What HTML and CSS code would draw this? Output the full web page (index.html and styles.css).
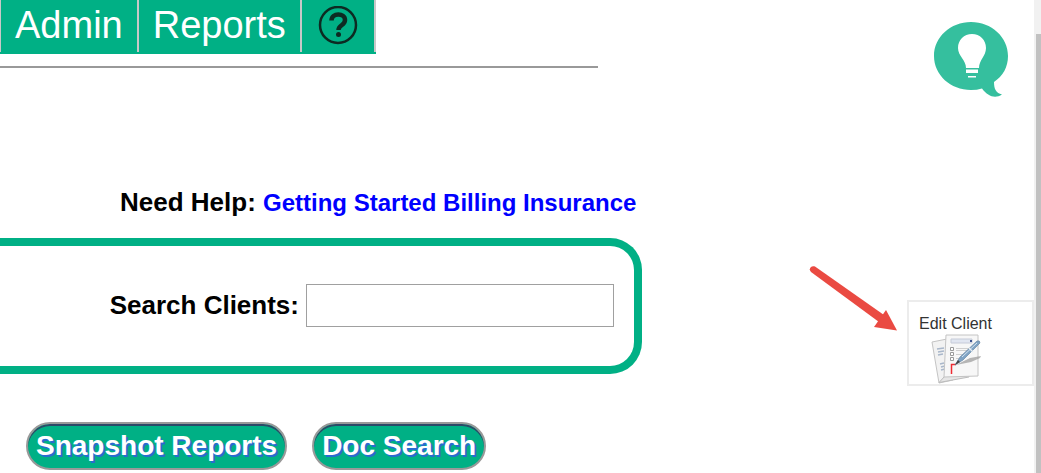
FILE: index.html
```html
<!DOCTYPE html>
<html lang="en">
<head>
<meta charset="utf-8">
<meta name="viewport" content="width=device-width, initial-scale=1">
<title>Clients</title>
<link rel="stylesheet" href="styles.css">
</head>
<body>
<div class="page">
  <main class="main">
    <nav class="menu">
      <a class="menu-item" href="#admin">Admin</a>
      <a class="menu-item" href="#reports">Reports</a>
      <a class="menu-item menu-help" href="#help" aria-label="Help">
        <svg width="40" height="40" viewBox="0 0 40 40" fill="none" stroke="#0d2a22">
          <circle cx="20" cy="19" r="18" stroke-width="2.500"/>
          <path d="M13.500 14.500C13.500 6.500 27 6.500 27 14c0 5.500-6.500 5-6.500 10" stroke-width="4.500"/>
          <circle cx="20.500" cy="28.500" r="2.500" fill="#0d2a22" stroke="none"/>
        </svg>
      </a>
    </nav>
    <hr class="rule">
    <p class="help-line">Need Help: <a class="help-link" href="#guide">Getting Started Billing Insurance</a></p>
    <form class="search-panel">
      <label class="search-label" for="client">Search Clients:</label>
      <input class="search-input" id="client" type="text">
    </form>
    <div class="actions">
      <button class="action" type="button">Snapshot Reports</button>
      <button class="action" type="button">Doc Search</button>
    </div>
  </main>
  <aside class="side">
    <svg class="tips" width="74" height="76" viewBox="0 0 74 76" role="img" aria-label="Tips">
      <path d="M37 0C57.500 0 74 15 74 34c0 11-5 20-14 26 0 7 2 11 8 12.500-7 4.500-14 2-20-6Q43 68 37 68C16.500 68 0 53 0 34S16.500 0 37 0Z" fill="#35bf9e"/>
      <path d="M38 12c8 0 14 6 14 14 0 8-7 12-7 20H32c0-8-8-12-8-20 0-8 6-14 14-14Z" fill="#fff"/>
      <path d="M32 47.500h12v3.500H32zM34 54h8v1.500h-8z" fill="#fff"/>
    </svg>
    <div class="edit-row">
      <svg class="arrow" width="88" height="70" viewBox="0 0 88 70" aria-hidden="true">
        <path d="M6 1.500 75 50 70 57 2 7C-1 4 2 0 6 1.500Z" fill="#ea4a42"/>
        <path d="M77 45 88 65.500 65 62Z" fill="#ea4a42"/>
      </svg>
      <a class="edit-card" href="#edit">
        <span>Edit Client</span>
        <svg width="52" height="50" viewBox="0 0 52 50" aria-hidden="true">
          <path d="M1 8 16 5l6 41-14 3Z" fill="#f2f2f2" stroke="#c4c4c4"/>
          <path d="M8 48.500 38 43V42H14Z" fill="#e6e6e6" stroke="#bbb"/>
          <path d="M6 15l7-1M7 18l6-1M7 21l5-1M9 30l4-1M10 33l4-1M10 36l4-1" stroke="#a9b7ca" stroke-width="1.500"/>
          <path d="M15 1h32v41l-34 1Z" fill="#f7f7f7" stroke="#c4c4c4"/>
          <path d="M20 5h21v4H20Z" fill="#e1e6f1" stroke="#c6cbd8"/>
          <path d="M39 6h2v2h-2z" fill="#3d5490"/>
          <path d="M19.500 13.500h3v3h-3zM19.500 18.500h3v3h-3zM19.500 23.500h3v3h-3z" fill="#fff" stroke="#999"/>
          <path d="M25 14.500h15M25 16.500h12M25 20.500h11M25 24.500h7" stroke="#cfcfcf"/>
          <path d="M25 31 39 24l11-2-1 2-9 4Z" fill="#999" opacity=".7"/>
          <path d="M25 30.500h-4.500V40" fill="none" stroke="#ee2b32" stroke-width="1.500"/>
          <path d="M24 31 29 23 46 7q3-1 3 2L32 26Z" fill="#7fa3c4" stroke="#6d8aa6" stroke-width=".7"/>
          <path d="M31 23 46 9" stroke="#d3e2ef"/>
          <path d="M24 31 27 26l2 2Z" fill="#444"/>
          <path d="M38 14l4 4" stroke="#e7eef4" stroke-width="1.500"/>
        </svg>
      </a>
    </div>
  </aside>
  <div class="track" aria-hidden="true"><div class="thumb"></div></div>
</div>
</body>
</html>
```
FILE: styles.css
```css
* {
  box-sizing: border-box;
}

body {
  margin: 0;
  background: #fff;
  color: #000;
  font-family: "Liberation Sans", Arial, sans-serif;
}

.page {
  display: flex;
  min-height: 100vh;
}

.main {
  flex: 642 1 0;
  min-width: 0;
}

.menu {
  display: flex;
  width: fit-content;
  padding-bottom: 2px;
  background: #00b085;
}

.menu-item {
  height: 52px;
  padding: 0 14px;
  border-left: 2px solid #c8c8c8;
  color: #fff;
  font-size: 38px;
  line-height: 50px;
  text-decoration: none;
}

.menu-item:first-child {
  border-left-width: 1px;
}

.menu-help {
  display: flex;
  align-items: center;
  padding: 0 16px;
  border-right: 2px solid #c8c8c8;
}

.rule {
  height: 2px;
  margin: 12px 44px 0 0;
  border: 0;
  background: #999;
}

.help-line {
  margin: 118px 0 0 120px;
  font-size: 26px;
  font-weight: bold;
  line-height: 32px;
  white-space: nowrap;
}

.help-link {
  color: #00f;
  font-size: 24px;
  text-decoration: none;
}

.search-panel {
  display: flex;
  align-items: center;
  justify-content: flex-end;
  gap: 7px;
  margin-top: 19px;
  padding: 38px 20px 39px 0;
  border: 8px solid #00b085;
  border-left: 0;
  border-radius: 0 32px 32px 0;
}

.search-label {
  font-size: 26px;
  font-weight: bold;
  white-space: nowrap;
}

.search-input {
  width: 308px;
  height: 43px;
  padding: 0 8px;
  border: 1px solid #a0a0a0;
  font: 24px "Liberation Sans", Arial, sans-serif;
}

.actions {
  display: flex;
  gap: 25px;
  padding: 48px 0 3px 26px;
}

.action {
  height: 48px;
  padding: 0 8px;
  border: 2px solid #999;
  border-radius: 24px;
  background: #00b085;
  box-shadow: inset 0 2px 0 #2c4a68;
  color: #fff;
  font: bold 28px "Liberation Sans", Arial, sans-serif;
  text-shadow: 2px 2px 0 #2a6bd0;
  white-space: nowrap;
}

.side {
  display: flex;
  flex: 392 1 0;
  flex-direction: column;
  align-items: flex-end;
  min-width: 0;
}

.tips {
  margin: 22px 26px 0 0;
}

.edit-row {
  display: flex;
  align-items: flex-start;
  gap: 10px;
  margin-top: 167px;
}

.arrow {
  flex: none;
}

.edit-card {
  display: flex;
  flex-direction: column;
  width: 127px;
  height: 86px;
  margin-top: 35px;
  padding: 12px 10px 0;
  border: 2px solid #ececec;
  color: #333;
  font-size: 16px;
  line-height: 20px;
  text-decoration: none;
}

.edit-card svg {
  margin-left: 12px;
}

.track {
  display: flex;
  flex: none;
  width: 7px;
  padding: 34px 0 0 2px;
  background: #f1f1f1;
}

.thumb {
  flex: 1;
  background: #c1c1c1;
}
```
